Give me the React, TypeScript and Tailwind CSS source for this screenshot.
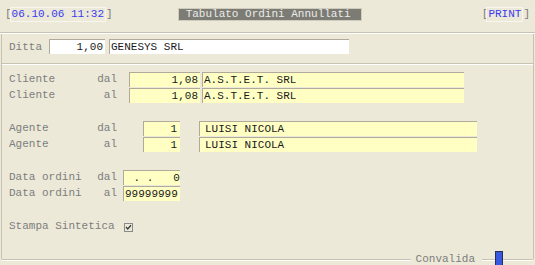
import React from "react";

function Box({
  className,
  children,
}: {
  className: string;
  children?: React.ReactNode;
}) {
  return (
    <div
      className={`h-[15px] leading-[15px] border-t border-l border-[#aeab9c] text-[#1a1a1a] whitespace-pre overflow-hidden ${className}`}
    >
      {children}
    </div>
  );
}

function Sep() {
  return (
    <div className="h-[2px] w-full border-t border-[#c6c3b3] bg-white" />
  );
}

function Label({ a, b }: { a: string; b: string }) {
  return (
    <div className="w-[108px] flex justify-between text-[#7d7d7d] whitespace-pre">
      <span>{a}</span>
      <span>{b}</span>
    </div>
  );
}

export default function App() {
  return (
    <div className="w-[535px] h-[265px] bg-[#ece9d8] overflow-hidden font-['Liberation_Mono','Courier_New',monospace] text-[11px] leading-[15px] flex flex-col">
      {/* header */}
      <div className="h-[32px] flex items-start pt-[7px] shrink-0">
        <span className="ml-[5px] text-[#7d7d7d] leading-[14px]">[</span>
        <div className="ml-[-2px] h-[15px] px-[1px] border border-[#f8f6ee] text-[#3a3af0] leading-[13px]">
          06.10.06 11:32
        </div>
        <span className="text-[#7d7d7d] leading-[14px]">]</span>
        <div className="ml-[65px] mt-[1px] h-[13px] w-[184px] bg-[#7c7c74] border border-[#cfccbd] text-[#ebebeb] leading-[11px] pl-[7px] whitespace-pre">
          Tabulato Ordini Annullati
        </div>
        <div className="flex-1" />
        <span className="text-[#7d7d7d] leading-[14px]">[</span>
        <div className="ml-[-2px] h-[15px] px-[1px] border border-[#f8f6ee] text-[#3a3af0] leading-[13px]">
          PRINT
        </div>
        <span className="text-[#7d7d7d] leading-[14px] mr-[5px]">]</span>
      </div>
      <Sep />

      {/* body */}
      <div className="mx-[1px] h-[225px] border-x border-[#c6c3b3] flex flex-col">
        {/* Ditta */}
        <div className="h-[29px] pt-[5px] pl-[7px] flex items-start shrink-0">
          <div className="w-[40px] text-[#7d7d7d] leading-[16px]">Ditta</div>
          <Box className="w-[56px] bg-white text-right pr-[2px]">1,00</Box>
          <Box className="ml-[4px] w-[240px] bg-white pl-[1px]">GENESYS SRL</Box>
        </div>
        <Sep />

        <div className="flex flex-col pl-[7px] pt-[7px]">
          {/* Cliente */}
          <div className="flex flex-col gap-[1px]">
            <div className="flex items-center h-[15px]">
              <Label a="Cliente" b="dal" />
              <Box className="ml-[12px] w-[71px] bg-[#ffffc4] text-right pr-[2px]">1,08</Box>
              <Box className="ml-[2px] w-[262px] bg-[#ffffc4] pl-[1px]">A.S.T.E.T. SRL</Box>
            </div>
            <div className="flex items-center h-[15px]">
              <Label a="Cliente" b="al" />
              <Box className="ml-[12px] w-[71px] bg-[#ffffc4] text-right pr-[2px]">1,08</Box>
              <Box className="ml-[2px] w-[262px] bg-[#ffffc4] pl-[1px]">A.S.T.E.T. SRL</Box>
            </div>
          </div>

          {/* Agente */}
          <div className="flex flex-col gap-[1px] mt-[18px]">
            <div className="flex items-center h-[15px]">
              <Label a="Agente" b="dal" />
              <Box className="ml-[26px] w-[37px] bg-[#ffffc4] text-right pr-[3px]">1</Box>
              <Box className="ml-[19px] w-[278px] bg-[#ffffc4] pl-[5px]">LUISI NICOLA</Box>
            </div>
            <div className="flex items-center h-[15px]">
              <Label a="Agente" b="al" />
              <Box className="ml-[26px] w-[37px] bg-[#ffffc4] text-right pr-[3px]">1</Box>
              <Box className="ml-[19px] w-[278px] bg-[#ffffc4] pl-[5px]">LUISI NICOLA</Box>
            </div>
          </div>

          {/* Data ordini */}
          <div className="flex flex-col gap-[1px] mt-[18px]">
            <div className="flex items-center h-[15px]">
              <Label a="Data ordini" b="dal" />
              <Box className="ml-[6px] w-[57px] bg-[#ffffc4] pl-[3px]">{" . .   0"}</Box>
            </div>
            <div className="flex items-center h-[15px]">
              <Label a="Data ordini" b="al" />
              <Box className="ml-[6px] w-[57px] bg-[#ffffc4] pl-[1px]">99999999</Box>
            </div>
          </div>

          {/* Stampa */}
          <div className="flex items-center h-[15px] mt-[18px]">
            <span className="text-[#7d7d7d] whitespace-pre">Stampa Sintetica</span>
            <svg width="9" height="9" viewBox="0 0 9 9" className="ml-[9px] mt-[1px]">
              <rect x="0.5" y="0.5" width="8" height="8" fill="#ece9d8" stroke="#8a8a8a" />
              <path d="M2 4 L3.7 6 L7 2.2" fill="none" stroke="#3a3a3a" strokeWidth="1.3" />
            </svg>
          </div>
        </div>

        {/* footer */}
        <div className="mt-auto -mb-[6px] h-[14px] flex items-start shrink-0">
          <div className="flex-1 mt-[8px] h-[2px] border-t border-[#c6c3b3] bg-white" />
          <span className="mx-[5px] mt-[1px] text-[#7d7d7d] leading-[14px]">Convalida</span>
          <div className="w-[13px] ml-[2px] mt-[8px] h-[2px] border-t border-[#c6c3b3] bg-white" />
          <div className="w-[8px] h-[15px] bg-[#3858e0] border border-[#23305e]" />
          <div className="w-[30px] mt-[8px] h-[2px] border-t border-[#c6c3b3] bg-white" />
        </div>
      </div>
    </div>
  );
}
